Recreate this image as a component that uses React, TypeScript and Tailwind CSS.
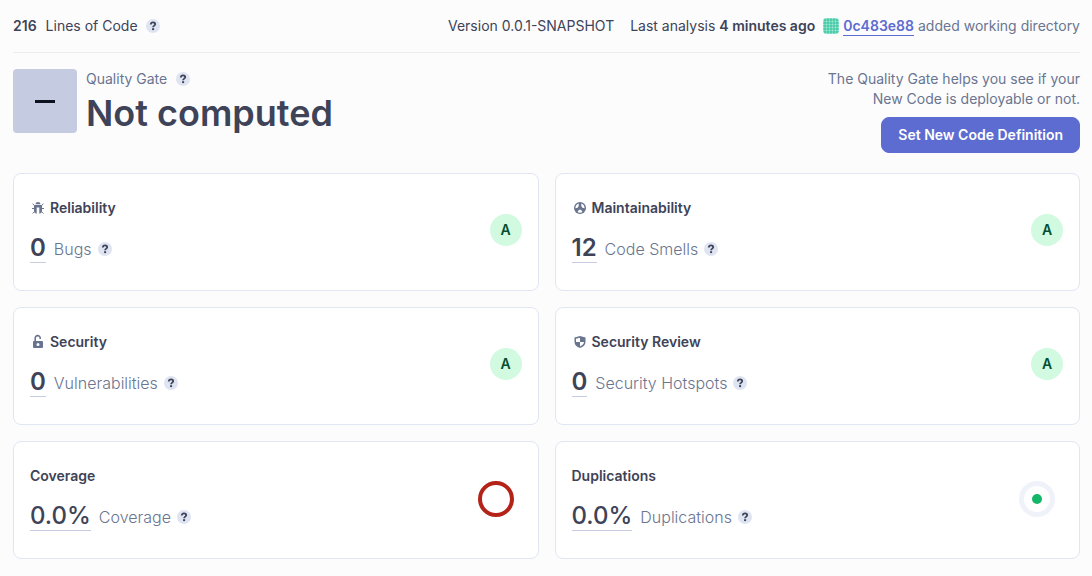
import type { ReactNode } from "react";

function Help({ label, className = "" }: { label: string; className?: string }) {
  return (
    <button
      type="button"
      aria-label={`About ${label}`}
      className={`flex size-3.5 shrink-0 items-center justify-center rounded-full bg-[#dfe4f2] text-[#3e4357] ${className}`}
    >
      <svg width="14" height="14" viewBox="0 0 14 14" fill="none" aria-hidden="true">
        <path d="M4.800 5.400C4.800 4 5.700 3.400 7 3.400s2.200.7 2.200 1.800c0 1.400-2.100 1.500-2.100 3.100" stroke="currentColor" strokeWidth="1.800" />
        <rect x="6.100" y="9.200" width="2" height="1.900" fill="currentColor" />
      </svg>
    </button>
  );
}

function BugIcon() {
  return (
    <svg width="16" height="16" viewBox="0 0 16 16" fill="none" aria-hidden="true">
      <path d="M5.500 4.200C5.600 2.800 6.600 2 8 2s2.400.8 2.500 2.200z" fill="currentColor" />
      <path d="M4 5h8v5.500c0 1.700-.9 2.900-2.700 3.300V7.500H6.700v6.300C4.900 13.400 4 12.200 4 10.500z" fill="currentColor" />
      <path d="M2.600 3.800l1.900 1.700M13.400 3.800l-1.900 1.700M2 8.500h2.500M14 8.500h-2.500M2.600 13.500l2-2M13.400 13.500l-2-2" stroke="currentColor" strokeWidth="1" />
    </svg>
  );
}

function CodeSmellIcon() {
  return (
    <svg width="16" height="16" viewBox="0 0 16 16" fill="none" aria-hidden="true">
      <circle cx="8" cy="8" r="6" fill="currentColor" />
      <path d="M6.700 3.500v2.400L5.600 7.700 3.400 8.200C3.300 6 4.600 4.200 6.700 3.500zM9.300 3.500v2.400l1.100 1.800 2.200.5c.1-2.200-1.200-4-3.300-4.700zM5.500 11.900l1.500-2.200h2l1.500 2.200c-1.500 1-3.500 1-5 0z" fill="#fff" />
    </svg>
  );
}

function LockIcon() {
  return (
    <svg width="16" height="16" viewBox="0 0 16 16" fill="none" aria-hidden="true">
      <path d="M5.200 8V4.300a2.500 2.500 0 0 1 5-.3v.9" stroke="currentColor" strokeWidth="1.600" />
      <path fillRule="evenodd" d="M4 7h8a1 1 0 0 1 1 1v5a1 1 0 0 1-1 1H4a1 1 0 0 1-1-1V8a1 1 0 0 1 1-1zm4 2a1.500 1.500 0 1 0 0 3 1.500 1.500 0 0 0 0-3z" fill="currentColor" />
    </svg>
  );
}

function ShieldIcon() {
  return (
    <svg width="16" height="16" viewBox="0 0 16 16" fill="none" aria-hidden="true">
      <path d="M8 2l5.500 1.500V8c0 2.800-2.200 5-5.500 6-3.300-1-5.500-3.200-5.500-6V3.500z" fill="currentColor" />
      <path d="M8 3.700V8H4V4.800zM8 8h4c-.1 2-1.600 3.500-4 4.400z" fill="#fff" />
    </svg>
  );
}

const avatarLines = [2, 5, 8, 11, 14];

function Avatar() {
  return (
    <svg width="16" height="16" viewBox="0 0 16 16" shapeRendering="crispEdges" className="rounded-sm" aria-hidden="true">
      <rect width="16" height="16" fill="#a3ead7" />
      {avatarLines.map((n) => (
        <g key={n} fill="#10b78a" fillOpacity="0.35">
          <rect x={n - 1} width="2" height="16" />
          <rect y={n - 1} width="16" height="2" />
        </g>
      ))}
    </svg>
  );
}

function Rating() {
  return (
    <span className="mt-4 flex size-8 items-center justify-center rounded-full bg-[#d1fae0] text-sm font-semibold text-[#054f31]">
      A
    </span>
  );
}

function CoverageRing() {
  return (
    <svg width="36" height="36" viewBox="0 0 36 36" fill="none" className="mt-[15px] mr-2" aria-hidden="true">
      <circle cx="18" cy="18" r="16" stroke="#b42318" strokeWidth="4" />
    </svg>
  );
}

function DuplicationRing() {
  return (
    <svg width="36" height="36" viewBox="0 0 36 36" fill="none" className="mt-[15px] mr-2" aria-hidden="true">
      <circle cx="18" cy="18" r="15.500" stroke="#eff2f9" strokeWidth="5" />
      <circle cx="18" cy="18" r="5" fill="#12b76a" />
    </svg>
  );
}

type Measure = { title: string; icon?: ReactNode; value: string; label: string; indicator: ReactNode };

const measures: Measure[] = [
  { title: "Reliability", icon: <BugIcon />, value: "0", label: "Bugs", indicator: <Rating /> },
  { title: "Maintainability", icon: <CodeSmellIcon />, value: "12", label: "Code Smells", indicator: <Rating /> },
  { title: "Security", icon: <LockIcon />, value: "0", label: "Vulnerabilities", indicator: <Rating /> },
  { title: "Security Review", icon: <ShieldIcon />, value: "0", label: "Security Hotspots", indicator: <Rating /> },
  { title: "Coverage", value: "0.0%", label: "Coverage", indicator: <CoverageRing /> },
  { title: "Duplications", value: "0.0%", label: "Duplications", indicator: <DuplicationRing /> },
];

function MeasureCard({ title, icon, value, label, indicator }: Measure) {
  const weight = value.endsWith("%") ? "font-medium" : "font-semibold";
  return (
    <section className="flex items-start justify-between rounded-lg border border-[#e1e6f3] bg-white px-4 pt-6 pb-[27px]">
      <div>
        <h2 className="flex items-center gap-1 text-sm leading-5 font-semibold text-[#3e4357]">
          {icon && <span className="text-[#69758f]">{icon}</span>}
          {title}
        </h2>
        <div className="mt-4 flex items-center">
          <a href="#" className={`border-b border-[#c5cbe0] text-2xl leading-7 text-[#3e4357] ${weight}`}>
            {value}
          </a>
          <span className="ml-2 text-base leading-6 font-light text-[#6a7590]">{label}</span>
          <Help label={label} className="ml-1.5" />
        </div>
      </div>
      {indicator}
    </section>
  );
}

export default function App() {
  return (
    <main className="min-h-screen bg-[#fcfcfd] pr-3 pb-4 pl-[13px] font-['Inter',sans-serif] text-sm leading-5 text-[#3e4357]">
      <header className="flex items-center justify-between border-b border-[#ebecf0] pt-4 pb-4">
        <div className="flex items-center">
          <strong className="font-semibold">216</strong>
          <span className="ml-[9px]">Lines of Code</span>
          <Help label="Lines of Code" className="ml-2" />
        </div>
        <div className="flex items-center">
          <span>Version 0.0.1-SNAPSHOT</span>
          <span className="ml-4">
            Last analysis <strong className="font-semibold">4 minutes ago</strong>
          </span>
          <span className="ml-2">
            <Avatar />
          </span>
          <a href="#" className="ml-1 border-b border-[#5d6cd0] leading-[18px] font-semibold text-[#5d6cd0]">
            0c483e88
          </a>
          <span className="ml-1 text-[#6a7590]">added working directory</span>
        </div>
      </header>

      <div className="mt-4 flex items-start justify-between">
        <div className="flex">
          <div className="flex size-16 items-center justify-center rounded-sm bg-[#c5cbe0]">
            <span className="h-[3px] w-5 bg-[#0e1120]" />
          </div>
          <div className="ml-[9px]">
            <div className="flex items-center text-[#6a7590]">
              Quality Gate
              <Help label="Quality Gate" className="ml-[9px]" />
            </div>
            <h1 className="text-4xl leading-[48px] font-semibold">Not computed</h1>
          </div>
        </div>
        <div className="flex flex-col items-end text-right text-[#6a7590]">
          <p>
            The Quality Gate helps you see if your
            <br />
            New Code is deployable or not.
          </p>
          <button type="button" className="mt-2 h-9 rounded-lg border border-[#5d6cd0] bg-[#5d6cd0] px-4 font-semibold text-white">
            Set New Code Definition
          </button>
        </div>
      </div>

      <div className="mt-5 grid grid-cols-2 gap-4">
        {measures.map((m) => (
          <MeasureCard key={m.title} {...m} />
        ))}
      </div>
    </main>
  );
}
